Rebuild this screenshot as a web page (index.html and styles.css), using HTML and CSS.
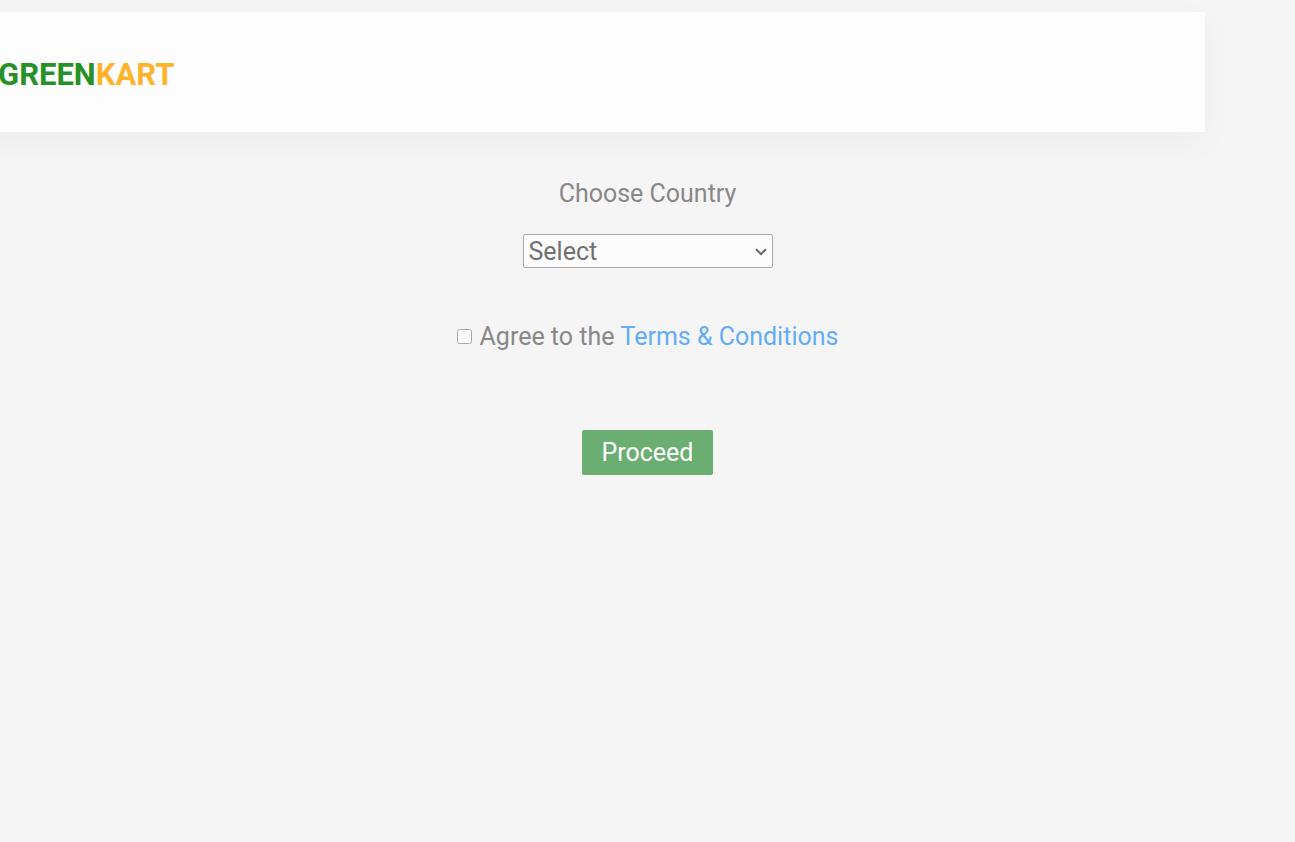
FILE: index.html
```html
<!DOCTYPE html>
<html lang="en">
<head>
<meta charset="utf-8">
<title>GreenKart</title>
<link rel="stylesheet" href="styles.css">
</head>
<body>
<header class="header">
  <div class="brand">GREEN<span class="brand-accent">KART</span></div>
</header>
<main class="checkout">
  <label class="country-label" for="country">Choose Country</label>
  <div class="country-field">
    <select class="country" id="country"><option>Select</option><option>India</option><option>United States</option></select>
    <svg class="chevron" viewBox="0 0 12 8" aria-hidden="true"><path d="M1 1.2 6 6.2 11 1.2" fill="none" stroke="#666" stroke-width="2"/></svg>
  </div>
  <div class="terms">
    <input class="agree" type="checkbox" id="agree">
    <label for="agree">Agree to the</label>
    <a class="terms-link" href="#">Terms &amp; Conditions</a>
  </div>
  <button class="proceed" type="button">Proceed</button>
</main>
</body>
</html>
```
FILE: styles.css
```css
* { box-sizing: border-box; }
body {
  margin: 0;
  padding-top: 12px;
  background: #f5f5f5;
  color: #888;
  font: 25px/30px Roboto, sans-serif;
  overflow-x: hidden;
}
.header {
  display: flex;
  align-items: center;
  height: 120px;
  margin: 0 90px 0 -40px;
  padding: 6px 0 0 38px;
  background: #fdfdfd;
  box-shadow: 0 10px 30px rgba(0, 0, 0, 0.04);
}
.brand {
  color: #279127;
  font-size: 31px;
  font-weight: 700;
}
.brand-accent { color: #ffb32c; }
.checkout {
  display: flex;
  flex-direction: column;
  align-items: center;
  padding-top: 47px;
}
.country-field {
  position: relative;
  width: 250px;
  margin-top: 25px;
}
.country {
  display: block;
  appearance: none;
  width: 100%;
  height: 34px;
  padding: 1px 24px 0 5px;
  border: 1px solid #aaa;
  border-radius: 2px;
  background: #fcfcfc;
  color: #707070;
  font: inherit;
}
.chevron {
  position: absolute;
  top: 14px;
  right: 6px;
  width: 12px;
  height: 8px;
  pointer-events: none;
}
.terms {
  display: flex;
  align-items: center;
  gap: 6px;
  margin-top: 54px;
}
.agree {
  width: 15px;
  height: 15px;
  margin: 0 2px 2px 0;
  opacity: 0.6;
}
.terms-link { color: #64acf7; text-decoration: none; }
.proceed {
  height: 45px;
  margin-top: 78px;
  padding: 1px 20px 0;
  border: 0;
  border-radius: 2px;
  background: #6aae72;
  color: #fff;
  font: inherit;
}
```
